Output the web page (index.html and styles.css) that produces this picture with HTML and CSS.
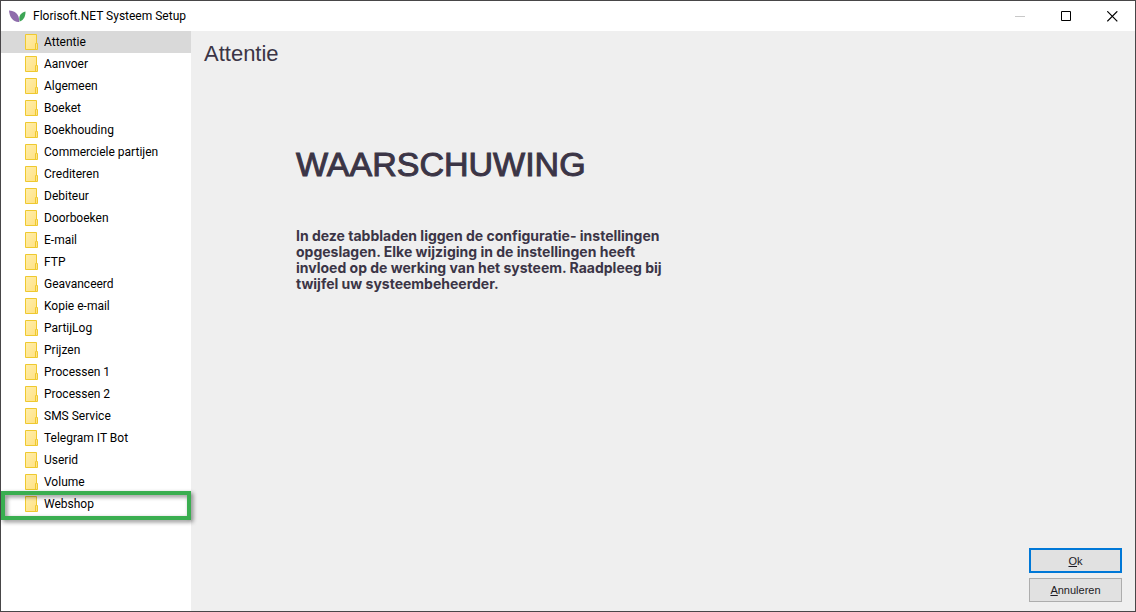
FILE: index.html
```html
<!DOCTYPE html>
<html lang="nl">
<head>
<meta charset="utf-8">
<title>Florisoft.NET Systeem Setup</title>
<link rel="stylesheet" href="styles.css">
</head>
<body>
<svg class="defs" width="0" height="0" aria-hidden="true">
  <defs>
    <linearGradient id="paper" x1="0" y1="0" x2="1" y2="1">
      <stop offset="0" stop-color="#ffeeab"/>
      <stop offset="1" stop-color="#ffe182"/>
    </linearGradient>
    <symbol id="folder" viewBox="0 0 13 16">
      <path d="M.5.5h11v9h1v6H.5z" fill="url(#paper)" stroke="#efc92f"/>
      <path d="M10.500 15v-5.500h1" fill="none" stroke="#efc92f"/>
    </symbol>
  </defs>
</svg>
<div class="window">
  <header class="titlebar">
    <svg class="logo" viewBox="0 0 18 13" aria-hidden="true">
      <path d="M1 .5C6.500 .5 11.500 4 11.300 12C5 12.500 1.500 7 1 .5z" fill="#8e6cab"/>
      <path d="M17.500 1.500C13 2.500 10 6 11.800 11.500C16 10 17.500 6 17.500 1.500z" fill="#3da555"/>
    </svg>
    <h1 class="title">Florisoft.NET Systeem Setup</h1>
    <div class="controls">
      <button class="control" aria-label="Minimaliseren" disabled><svg viewBox="0 0 11 11"><path d="M0 5.500h10" stroke="#c8c8c8"/></svg></button>
      <button class="control" aria-label="Maximaliseren"><svg viewBox="0 0 11 11"><path d="M.5.5h9v9h-9z" fill="none" stroke="#000"/></svg></button>
      <button class="control" aria-label="Sluiten"><svg viewBox="0 0 11 11"><path d="M.3.300l10 10M10.300.300l-10 10" stroke="#000" stroke-width="1.200"/></svg></button>
    </div>
  </header>
  <div class="body">
    <nav class="sidebar">
      <ul class="tree">
        <li><button class="item selected"><svg class="folder"><use href="#folder"/></svg>Attentie</button></li>
        <li><button class="item"><svg class="folder"><use href="#folder"/></svg>Aanvoer</button></li>
        <li><button class="item"><svg class="folder"><use href="#folder"/></svg>Algemeen</button></li>
        <li><button class="item"><svg class="folder"><use href="#folder"/></svg>Boeket</button></li>
        <li><button class="item"><svg class="folder"><use href="#folder"/></svg>Boekhouding</button></li>
        <li><button class="item"><svg class="folder"><use href="#folder"/></svg>Commerciele partijen</button></li>
        <li><button class="item"><svg class="folder"><use href="#folder"/></svg>Crediteren</button></li>
        <li><button class="item"><svg class="folder"><use href="#folder"/></svg>Debiteur</button></li>
        <li><button class="item"><svg class="folder"><use href="#folder"/></svg>Doorboeken</button></li>
        <li><button class="item"><svg class="folder"><use href="#folder"/></svg>E-mail</button></li>
        <li><button class="item"><svg class="folder"><use href="#folder"/></svg>FTP</button></li>
        <li><button class="item"><svg class="folder"><use href="#folder"/></svg>Geavanceerd</button></li>
        <li><button class="item"><svg class="folder"><use href="#folder"/></svg>Kopie e-mail</button></li>
        <li><button class="item"><svg class="folder"><use href="#folder"/></svg>PartijLog</button></li>
        <li><button class="item"><svg class="folder"><use href="#folder"/></svg>Prijzen</button></li>
        <li><button class="item"><svg class="folder"><use href="#folder"/></svg>Processen 1</button></li>
        <li><button class="item"><svg class="folder"><use href="#folder"/></svg>Processen 2</button></li>
        <li><button class="item"><svg class="folder"><use href="#folder"/></svg>SMS Service</button></li>
        <li><button class="item"><svg class="folder"><use href="#folder"/></svg>Telegram IT Bot</button></li>
        <li><button class="item"><svg class="folder"><use href="#folder"/></svg>Userid</button></li>
        <li><button class="item"><svg class="folder"><use href="#folder"/></svg>Volume</button></li>
        <li class="marked"><button class="item"><svg class="folder"><use href="#folder"/></svg>Webshop</button></li>
      </ul>
    </nav>
    <main class="content">
      <h2 class="heading">Attentie</h2>
      <section class="notice">
        <h3 class="warning">WAARSCHUWING</h3>
        <p class="message">In deze tabbladen liggen de configuratie- instellingen<br>opgeslagen. Elke wijziging in de instellingen heeft<br>invloed op de werking van het systeem. Raadpleeg bij<br>twijfel uw systeembeheerder.</p>
      </section>
      <footer class="actions">
        <button class="action primary"><u>O</u>k</button>
        <button class="action"><u>A</u>nnuleren</button>
      </footer>
    </main>
  </div>
</div>
</body>
</html>
```
FILE: styles.css
```css
* { box-sizing: border-box; }

body {
  margin: 0;
  color: #000;
  font: 12px/16px Roboto, "Noto Sans", sans-serif;
}

button {
  font: inherit;
  color: inherit;
}

.defs { position: absolute; }

.window {
  display: flex;
  flex-direction: column;
  min-height: 100vh;
  border: 1px solid #484648;
  background: #efefef;
}

.titlebar {
  display: flex;
  align-items: center;
  height: 30px;
  padding-left: 7px;
  background: #fff;
}

.logo {
  width: 18px;
  height: 13px;
}

.title {
  flex: 1;
  margin: 0 0 0 7px;
  font-size: 12px;
  font-weight: 400;
}

.controls { display: flex; }

.control {
  display: grid;
  place-items: center;
  width: 46px;
  height: 30px;
  padding: 0;
  border: 0;
  background: none;
}

.control svg {
  width: 11px;
  height: 11px;
}

.body {
  display: flex;
  flex: 1;
}

.sidebar {
  flex: 0 0 190px;
  background: #fff;
}

.tree {
  margin: 0;
  padding: 0;
  list-style: none;
}

.item {
  display: flex;
  align-items: center;
  gap: 6px;
  width: 100%;
  height: 22px;
  padding: 0 0 0 24px;
  border: 0;
  background: none;
  text-align: left;
}

.selected { background: #d9d9d9; }

.folder {
  width: 13px;
  height: 16px;
}

.marked { position: relative; }

.marked::after {
  content: "";
  position: absolute;
  inset: -2px 0 -5px;
  border: 4px solid #3aae50;
  filter: drop-shadow(2px 2px 2px #0007);
  pointer-events: none;
}

.content {
  display: flex;
  flex: 1;
  flex-direction: column;
  padding: 9px 13px;
  color: #3b3546;
  font-family: "Liberation Sans", Arial, sans-serif;
}

.heading {
  margin: 0;
  font-size: 22px;
  font-weight: 400;
  line-height: 28px;
}

.notice {
  flex: 1;
  padding: 76px 0 0 92px;
}

.warning {
  margin: 0 0 44px;
  font-size: 34px;
  font-weight: 400;
  line-height: 40px;
  -webkit-text-stroke: 1px #3b3546;
}

.message {
  margin: 0;
  font-family: Inter, "Liberation Sans", sans-serif;
  font-size: 14px;
  font-weight: 700;
  line-height: 16px;
}

.actions {
  display: flex;
  flex-direction: column;
  align-items: flex-end;
  gap: 5px;
}

.action {
  width: 93px;
  height: 24px;
  padding: 0;
  border: 1px solid #adadad;
  background: #e1e1e1;
  color: #1c1a24;
  font-size: 11px;
}

.primary {
  height: 25px;
  border: 2px solid #0078d7;
}
```
